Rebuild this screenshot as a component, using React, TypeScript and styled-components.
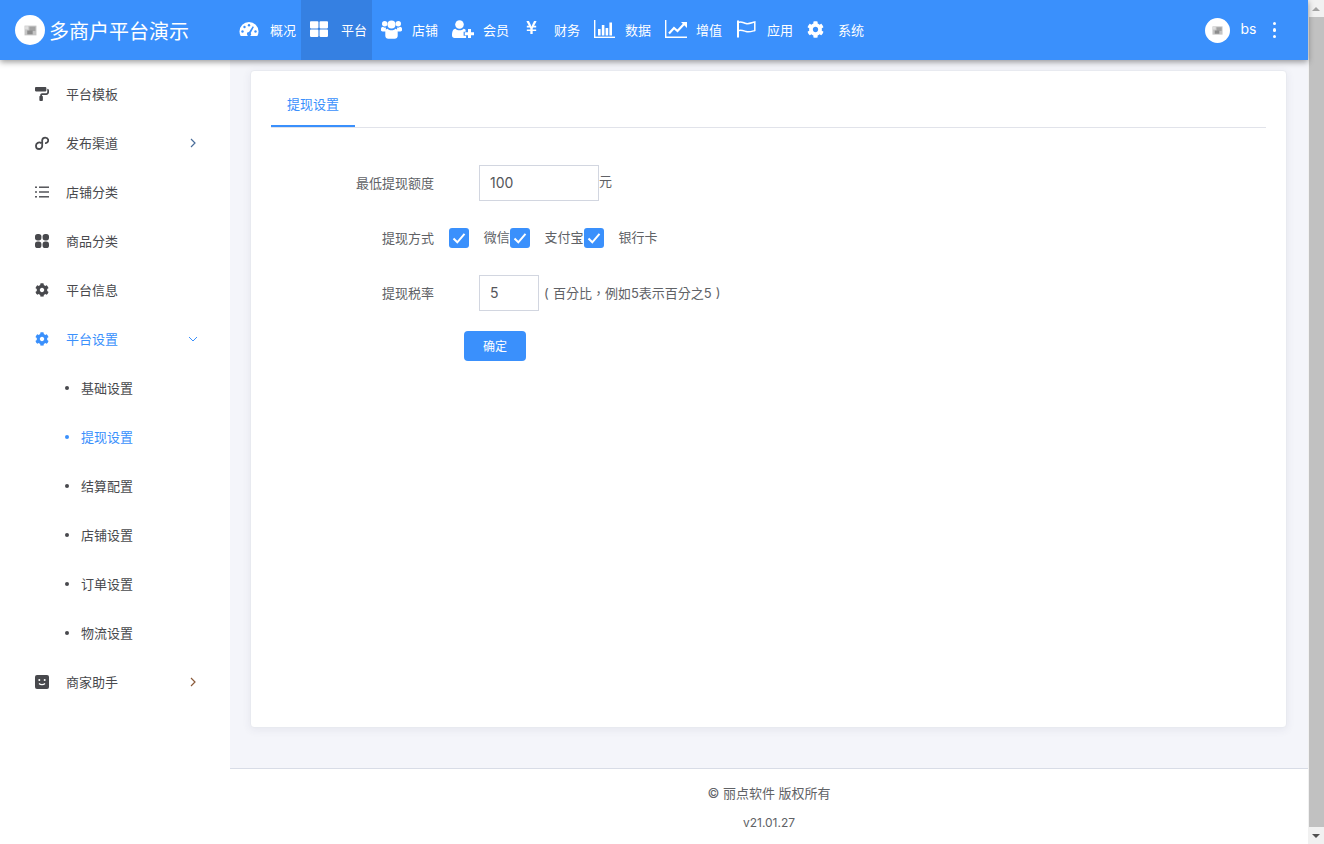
import React from 'react';
import styled, { createGlobalStyle } from 'styled-components';
import { FaThLarge, FaYenSign, FaCog, FaPaintRoller } from 'react-icons/fa';

const GlobalStyle = createGlobalStyle`
  html, body {
    margin: 0;
    height: 100%;
    overflow: hidden;
  }
  body {
    font-family: Inter, "Noto Sans CJK SC", sans-serif;
    font-size: 13px;
    color: #48494d;
  }
`;

const Page = styled.div`
  display: flex;
  width: 1324px;
  height: 844px;
  overflow: hidden;
`;

const Frame = styled.div`
  width: 1308px;
  height: 844px;
  display: flex;
  flex-direction: column;
  position: relative;
`;

const TopBar = styled.header`
  height: 60px;
  flex-shrink: 0;
  display: flex;
  align-items: center;
  background: #3a90fc;
  color: #fff;
  box-shadow: 0 2px 6px rgba(0, 0, 0, 0.4);
  position: relative;
  z-index: 2;
`;

const Brand = styled.div`
  width: 230px;
  flex-shrink: 0;
  display: flex;
  align-items: center;
  padding-left: 15px;
  box-sizing: border-box;
  font-size: 20px;
  gap: 5px;
  span:last-child {
    margin-left: -1px;
  }
`;

const AvatarCircle = styled.span<{ $size: number }>`
  width: ${(p) => p.$size}px;
  height: ${(p) => p.$size}px;
  border-radius: 50%;
  background: #fff;
  display: flex;
  align-items: center;
  justify-content: center;
  flex-shrink: 0;
`;

const TopNav = styled.nav`
  display: flex;
  height: 60px;
  flex: 1;
`;

const TopItem = styled.a<{ $active?: boolean }>`
  width: 71px;
  height: 60px;
  display: flex;
  align-items: center;
  background: ${(p) => (p.$active ? '#3580e2' : 'transparent')};
  font-size: 13px;
`;

const TopIcon = styled.span`
  width: 40px;
  flex-shrink: 0;
  padding-left: 9px;
  box-sizing: border-box;
  display: flex;
  align-items: center;
  height: 20px;
  margin-top: -2px;
`;

const TopLabel = styled.span`
  margin-top: -2px;
`;

const UserBox = styled.div`
  display: flex;
  align-items: center;
  padding-right: 32px;
  font-size: 14px;
`;

const UserName = styled.span`
  margin-left: 11px;
  margin-right: 16px;
  margin-top: -3px;
`;

const Dots = styled.span`
  display: flex;
  flex-direction: column;
  gap: 3px;
  i {
    width: 3.5px;
    height: 3.5px;
    border-radius: 50%;
    background: #fff;
    display: block;
  }
`;

const Body = styled.div`
  flex: 1;
  display: flex;
  min-height: 0;
`;

const SideBar = styled.aside`
  width: 230px;
  flex-shrink: 0;
  background: #fff;
  padding-top: 9.5px;
  box-sizing: border-box;
`;

const SideRow = styled.div<{ $active?: boolean }>`
  height: 49px;
  display: flex;
  align-items: center;
  padding-left: 35px;
  color: ${(p) => (p.$active ? '#3a90fc' : '#48494d')};
`;

const SideIcon = styled.span`
  width: 31px;
  display: flex;
  align-items: center;
  font-size: 14px;
`;

const SideText = styled.span`
  flex: 1;
  margin-top: -2px;
`;

const Caret = styled.span`
  width: 40px;
  display: flex;
  align-items: center;
`;

const SubRow = styled.div<{ $active?: boolean }>`
  height: 49px;
  display: flex;
  align-items: center;
  padding-left: 65px;
  color: ${(p) => (p.$active ? '#3a90fc' : '#48494d')};
  &::before {
    content: '';
    width: 4px;
    height: 4px;
    border-radius: 50%;
    background: currentColor;
    margin-right: 12px;
  }
`;

const SubText = styled.span`
  margin-top: -2px;
`;

const Main = styled.main`
  flex: 1;
  min-width: 0;
  display: flex;
  flex-direction: column;
  background: #f4f5fa;
`;

const Card = styled.section`
  margin: 10px 21px 0 20px;
  height: 658px;
  flex-shrink: 0;
  background: #fff;
  border-radius: 4px;
  border: 1px solid #e8eaf0;
  box-sizing: border-box;
  box-shadow: 0 2px 8px rgba(60, 70, 100, 0.08);
  padding: 0 20px;
`;

const TabBar = styled.div`
  height: 55.5px;
  display: flex;
  border-bottom: 1px solid #e1e3ea;
`;

const Tab = styled.div`
  width: 84px;
  height: 56px;
  box-sizing: border-box;
  display: flex;
  align-items: center;
  justify-content: center;
  color: #3a90fc;
  border-bottom: 2px solid #3a90fc;
  padding-top: 11px;
`;

const Form = styled.form`
  padding-top: 37.5px;
`;

const FormRow = styled.div`
  display: flex;
  align-items: center;
  height: 36px;
  margin-bottom: 19px;
  color: #606266;
`;

const Label = styled.label`
  width: 163px;
  flex-shrink: 0;
  text-align: right;
  margin-top: -1px;
`;

const Field = styled.input<{ $width: number }>`
  width: ${(p) => p.$width}px;
  height: 36px;
  box-sizing: border-box;
  margin-left: 45px;
  padding: 0 10px 2px;
  border: 1px solid #d2d6e0;
  font: inherit;
  font-size: 14px;
  color: #55565a;
  outline: none;
`;

const Unit = styled.span`
  color: #606266;
  margin-top: -5px;
`;

const Hint = styled.span`
  margin-left: 5px;
  color: #606266;
  margin-top: -1px;
  word-spacing: 0.5px;
  font-family: Inter, "Noto Sans CJK TC", sans-serif;
`;

const CheckGroup = styled.div`
  display: flex;
  align-items: center;
  margin-left: 15px;
  margin-top: -1px;
`;

const CheckItem = styled.span`
  display: flex;
  align-items: center;
`;

const CheckBox = styled.span`
  width: 20px;
  height: 20px;
  border-radius: 3px;
  background: #3a90fc;
  display: flex;
  align-items: center;
  justify-content: center;
  margin-right: 14.8px;
`;

const CheckText = styled.span`
  margin-top: -2px;
`;

const Submit = styled.button`
  display: block;
  width: 62px;
  height: 30px;
  margin-left: 193px;
  margin-top: 20px;
  padding: 0 0 2px;
  border: 0;
  border-radius: 4px;
  background: #3a90fc;
  color: #fff;
  font: inherit;
  font-size: 12px;
`;

const Footer = styled.footer`
  margin-top: auto;
  height: 76px;
  flex-shrink: 0;
  background: #fff;
  border-top: 1px solid #d8dce6;
  display: flex;
  flex-direction: column;
  align-items: center;
  color: #606266;
  padding-top: 15px;
  box-sizing: border-box;
  gap: 12px;
`;

const FooterLine = styled.div<{ $small?: boolean }>`
  line-height: 18px;
  font-size: ${(p) => (p.$small ? '12px' : '13px')};
`;

const ScrollTrack = styled.div`
  width: 16px;
  height: 844px;
  flex-shrink: 0;
  background: #f1f1f1;
  display: flex;
  flex-direction: column;
  align-items: center;
`;

const ScrollArrow = styled.span<{ $dir: 'up' | 'down' }>`
  height: 17px;
  flex-shrink: 0;
  display: flex;
  align-items: center;
  justify-content: center;
  &::before {
    content: '';
    border-left: 4px solid transparent;
    border-right: 4px solid transparent;
    ${(p) =>
      p.$dir === 'up' ? 'border-bottom: 4px solid #a3a3a3;' : 'border-top: 4px solid #505050;'}
  }
`;

const ScrollThumb = styled.div`
  flex: 1;
  width: 15px;
  background: #c1c1c1;
`;

const Logo: React.FC<{ size: number }> = ({ size }) => (
  <svg width={size} height={size} viewBox="0 0 12 12">
    <rect x="0.5" y="1.5" width="11" height="9" fill="#c4c4c4" />
    <rect x="5" y="2.5" width="5.500" height="4" fill="#a2a2a2" />
    <rect x="3" y="6" width="5" height="3.500" fill="#8c8c8c" />
    <rect x="1" y="2" width="3" height="3" fill="#dedede" />
  </svg>
);

const DashIcon = () => (
  <svg width="20" height="16" viewBox="0 0 20 16">
    <path d="M10 1a9.500 9.500 0 0 1 9.500 9.500c0 1.700-.4 3.200-1.200 4.500H1.700A9.300 9.300 0 0 1 .5 10.500 9.500 9.500 0 0 1 10 1z" fill="#fff" />
    <g fill="#3a90fc">
      <circle cx="3.500" cy="10.500" r="1.200" />
      <circle cx="5.500" cy="6" r="1.200" />
      <circle cx="10" cy="4.200" r="1.200" />
      <circle cx="16.500" cy="10.500" r="1.200" />
      <path d="M13.700 5.200l1.200.7-3.200 6.100a2 2 0 1 1-1.700-.9z" />
    </g>
  </svg>
);

const UsersIcon = () => (
  <svg width="21" height="19" viewBox="0 0 21 19" fill="#fff">
    <circle cx="3.700" cy="3.800" r="2.700" />
    <circle cx="17.300" cy="3.800" r="2.700" />
    <circle cx="10.500" cy="4.500" r="4" />
    <path d="M0 8.700c0-1.300 1-2 2-2 .6.700 1.400 1 2.300 1 .3 0 .6 0 .8-.1-.3 1-.4 2.500.3 3.800H1.500C.6 11.400 0 11 0 10z" />
    <path d="M21 8.700c0-1.300-1-2-2-2-.6.700-1.400 1-2.300 1-.3 0-.6 0-.8-.1.300 1 .4 2.500-.3 3.800h3.900c.9 0 1.500-.4 1.500-1.400z" />
    <path d="M6.600 8.700c1 1 2.400 1.500 3.900 1.500s2.900-.5 3.900-1.500c1.400 0 2.300 1.400 2.300 3.600v3.500c0 1.800-1.300 3-3 3H7.300c-1.700 0-3-1.200-3-3v-3.500c0-2.200.9-3.600 2.300-3.600z" />
  </svg>
);

const UserPlusIcon = () => (
  <svg width="22" height="18" viewBox="0 0 22 18" fill="#fff">
    <circle cx="7.500" cy="4.500" r="4.300" />
    <path d="M3.500 8.800c1 1 2.400 1.500 4 1.500s3-.5 4-1.500c.8.100 1.500.4 2.100.9v2h-2v4h2.500V18H2.500C1 18 0 17 0 15.500c0-3.500.9-6.700 3.500-6.700z" />
    <path d="M16 9h3v3.300h3v3h-3v2.700h-3v-2.700h-3.200v-3H16z" />
  </svg>
);

const BarsIcon = () => (
  <svg width="21" height="18" viewBox="0 0 21 18" fill="#fff">
    <rect x="0" y="0" width="1.400" height="18" />
    <rect x="0" y="16.600" width="21" height="1.400" />
    <rect x="4" y="9" width="2.600" height="6.500" />
    <rect x="7.800" y="5" width="2.600" height="10.500" />
    <rect x="11.600" y="8" width="2.600" height="7.500" />
    <rect x="15.400" y="2.500" width="2.600" height="13" />
  </svg>
);

const LineIcon = () => (
  <svg width="22" height="18" viewBox="0 0 22 18" fill="none">
    <path d="M.7 0v17.300H22" stroke="#fff" strokeWidth="1.400" />
    <path d="M4 13.500l5-5.500 3.500 3L19.500 3.500" stroke="#fff" strokeWidth="2.200" />
    <path d="M16 2h6v6z" fill="#fff" />
  </svg>
);

const FlagIcon = () => (
  <svg width="20" height="18" viewBox="0 0 20 18" fill="none" stroke="#fff" strokeWidth="1.500">
    <path d="M2 .5v17" strokeWidth="2" />
    <path d="M2 2.500c3-1.500 5 .2 8 1s5.500-.8 8.800-1.500v8.500c-3.300 1-5.500 2-8.800 1s-5-1.800-8-.8" />
  </svg>
);

const LinkIcon = () => (
  <svg width="14" height="14" viewBox="0 0 14 14" fill="none" stroke="#48494d" strokeWidth="1.800">
    <path d="M6.300 7.300A3.200 3.200 0 0 0 1 9.900a3.100 3.100 0 0 0 6.200 0V4.100a3.100 3.100 0 0 1 6.100 0 3.100 3.100 0 0 1-3.300 3" />
  </svg>
);

const ListIcon = () => (
  <svg width="14" height="12" viewBox="0 0 14 12" fill="#48494d">
    <rect x="0" y="0.500" width="2" height="1.400" />
    <rect x="4" y="0.500" width="10" height="1.400" />
    <rect x="0" y="5.300" width="2" height="1.400" />
    <rect x="4" y="5.300" width="10" height="1.400" />
    <rect x="0" y="10.100" width="2" height="1.400" />
    <rect x="4" y="10.100" width="10" height="1.400" />
  </svg>
);

const CloverIcon = () => (
  <svg width="14" height="14" viewBox="0 0 14 14" fill="#48494d">
    <rect x="0" y="0" width="6.400" height="6.400" rx="2.600" />
    <rect x="7.600" y="0" width="6.400" height="6.400" rx="2.600" />
    <rect x="0" y="7.600" width="6.400" height="6.400" rx="2.600" />
    <rect x="7.600" y="7.600" width="6.400" height="6.400" rx="2.600" />
  </svg>
);

const SmileIcon = () => (
  <svg width="14" height="14" viewBox="0 0 14 14">
    <rect width="14" height="14" rx="2" fill="#48494d" />
    <circle cx="4.300" cy="5" r="1" fill="#fff" />
    <circle cx="9.700" cy="5" r="1" fill="#fff" />
    <path d="M4 8.500c1.500 1.600 4.500 1.600 6 0" stroke="#fff" strokeWidth="1.200" fill="none" />
  </svg>
);

const ChevronRight: React.FC<{ color: string }> = ({ color }) => (
  <svg width="6" height="10" viewBox="0 0 6 10" fill="none">
    <path d="M1 1l4 4-4 4" stroke={color} strokeWidth="1.200" />
  </svg>
);

const ChevronDown = () => (
  <svg width="10" height="6" viewBox="0 0 10 6" fill="none" style={{ marginLeft: -2 }}>
    <path d="M1 1l4 4 4-4" stroke="#3a90fc" strokeWidth="1" />
  </svg>
);

const CheckMark = () => (
  <svg width="14" height="12" viewBox="0 0 14 12" fill="none">
    <path d="M1.500 6.500l3.800 3.800 7.200-8.500" stroke="#fff" strokeWidth="2" />
  </svg>
);

const topItems = [
  { label: '概况', icon: <DashIcon /> },
  { label: '平台', icon: <FaThLarge size={18} color="#fff" />, active: true },
  { label: '店铺', icon: <UsersIcon /> },
  { label: '会员', icon: <UserPlusIcon /> },
  { label: '财务', icon: <FaYenSign size={15} color="#fff" style={{ marginLeft: 1, marginTop: -4 }} /> },
  { label: '数据', icon: <BarsIcon /> },
  { label: '增值', icon: <LineIcon /> },
  { label: '应用', icon: <FlagIcon /> },
  { label: '系统', icon: <FaCog size={17} color="#fff" /> },
];

const subItems = ['基础设置', '提现设置', '结算配置', '店铺设置', '订单设置', '物流设置'];

const App: React.FC = () => {
  return (
    <Page>
      <GlobalStyle />
      <Frame>
        <TopBar>
          <Brand>
            <AvatarCircle $size={30}>
              <Logo size={13} />
            </AvatarCircle>
            <span>多商户平台演示</span>
          </Brand>
          <TopNav>
            {topItems.map((item) => (
              <TopItem key={item.label} $active={item.active}>
                <TopIcon>{item.icon}</TopIcon>
                <TopLabel>{item.label}</TopLabel>
              </TopItem>
            ))}
          </TopNav>
          <UserBox>
            <AvatarCircle $size={25}>
              <Logo size={11} />
            </AvatarCircle>
            <UserName>bs</UserName>
            <Dots>
              <i />
              <i />
              <i />
            </Dots>
          </UserBox>
        </TopBar>
        <Body>
          <SideBar>
            <SideRow>
              <SideIcon><FaPaintRoller /></SideIcon>
              <SideText>平台模板</SideText>
            </SideRow>
            <SideRow>
              <SideIcon><LinkIcon /></SideIcon>
              <SideText>发布渠道</SideText>
              <Caret><ChevronRight color="#4a6d9a" /></Caret>
            </SideRow>
            <SideRow>
              <SideIcon><ListIcon /></SideIcon>
              <SideText>店铺分类</SideText>
            </SideRow>
            <SideRow>
              <SideIcon><CloverIcon /></SideIcon>
              <SideText>商品分类</SideText>
            </SideRow>
            <SideRow>
              <SideIcon><FaCog /></SideIcon>
              <SideText>平台信息</SideText>
            </SideRow>
            <SideRow $active>
              <SideIcon><FaCog /></SideIcon>
              <SideText>平台设置</SideText>
              <Caret><ChevronDown /></Caret>
            </SideRow>
            {subItems.map((name) => (
              <SubRow key={name} $active={name === '提现设置'}>
                <SubText>{name}</SubText>
              </SubRow>
            ))}
            <SideRow>
              <SideIcon><SmileIcon /></SideIcon>
              <SideText>商家助手</SideText>
              <Caret><ChevronRight color="#8a5a3a" /></Caret>
            </SideRow>
          </SideBar>
          <Main>
            <Card>
              <TabBar>
                <Tab>提现设置</Tab>
              </TabBar>
              <Form>
                <FormRow>
                  <Label>最低提现额度</Label>
                  <Field $width={120} defaultValue="100" />
                  <Unit>元</Unit>
                </FormRow>
                <FormRow>
                  <Label>提现方式</Label>
                  <CheckGroup>
                    {['微信', '支付宝', '银行卡'].map((name) => (
                      <CheckItem key={name}>
                        <CheckBox><CheckMark /></CheckBox>
                        <CheckText>{name}</CheckText>
                      </CheckItem>
                    ))}
                  </CheckGroup>
                </FormRow>
                <FormRow>
                  <Label>提现税率</Label>
                  <Field $width={60} defaultValue="5" />
                  <Hint>( 百分比，例如5表示百分之5 )</Hint>
                </FormRow>
                <Submit type="button">确定</Submit>
              </Form>
            </Card>
            <Footer>
              <FooterLine>© 丽点软件 版权所有</FooterLine>
              <FooterLine $small>v21.01.27</FooterLine>
            </Footer>
          </Main>
        </Body>
      </Frame>
      <ScrollTrack>
        <ScrollArrow $dir="up" />
        <ScrollThumb />
        <ScrollArrow $dir="down" />
      </ScrollTrack>
    </Page>
  );
};

export default App;
